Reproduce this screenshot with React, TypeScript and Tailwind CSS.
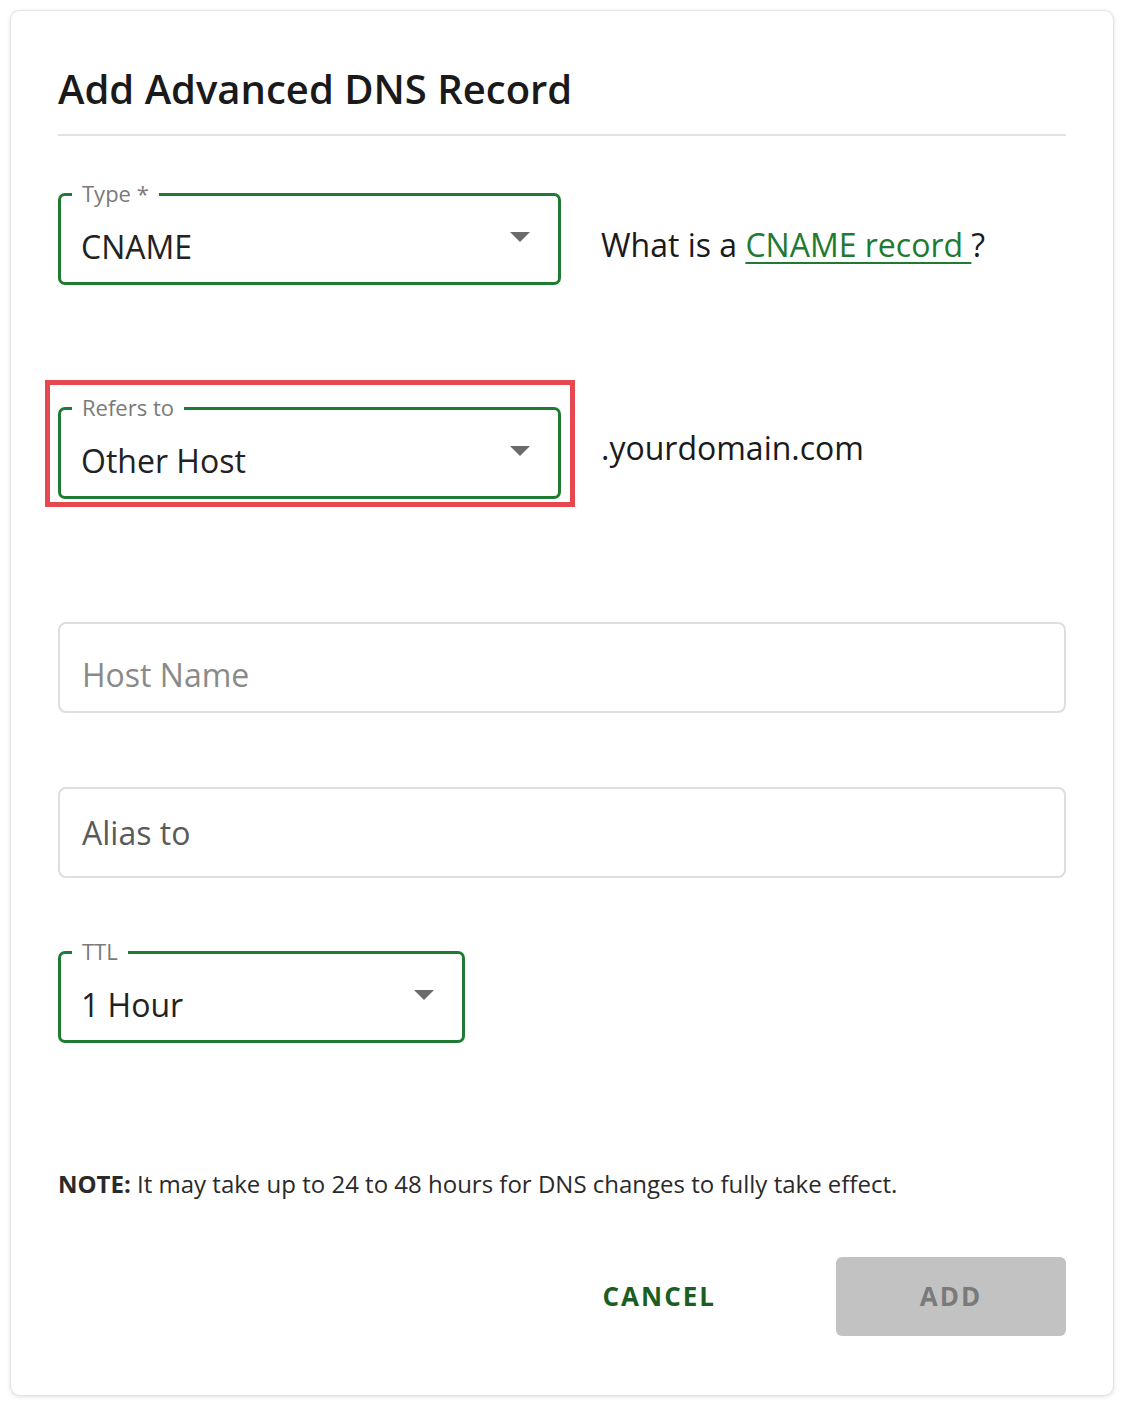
import React from "react";

function Arrow() {
  return (
    <svg width="20" height="11" viewBox="0 0 20 11" className="absolute right-[28px] top-[36px]">
      <polygon points="0,0 20,0 10,10" fill="#6b6b6b" />
    </svg>
  );
}

function Select({ label, value, width }: { label: string; value: string; width: string }) {
  return (
    <div className={`relative h-[92px] rounded-[7px] border-[3px] border-[#1f7a33] bg-white ${width}`}>
      <span className="absolute -top-[17px] left-[11px] bg-white px-[10px] text-[22px] leading-[28px] text-[#7a7a7a]">
        {label}
      </span>
      <div className="flex h-full items-center pl-[20px] pt-[16px] text-[32px] leading-[38px] text-[#222]">
        {value}
      </div>
      <Arrow />
    </div>
  );
}

export default function App() {
  return (
    <div className="min-h-screen bg-white p-[10px]" style={{ fontFamily: '"Open Sans", "Noto Sans", sans-serif' }}>
      <div className="h-[1386px] w-[1104px] rounded-[10px] border border-[#e4e4e4] bg-white px-[47px] pt-[54px] shadow-[0_1px_4px_rgba(0,0,0,0.12)]">
        <h1 className="text-[40px] font-semibold leading-[48px] text-[#1a1a1a]">Add Advanced DNS Record</h1>
        <div className="mt-[21px] h-[2px] bg-[#e2e2e2]" />

        <div className="mt-[57px] flex items-center">
          <Select label="Type *" value="CNAME" width="w-[503px]" />
          <div className="ml-[40px] pt-[12px] text-[32px] leading-[40px] text-[#1a1a1a]">
            What is a{" "}
            <a className="text-[#1f7a33] underline decoration-[2px] underline-offset-[5px]">CNAME record </a>?
          </div>
        </div>

        <div className="mt-[122px] flex items-center">
          <div className="relative">
            <Select label="Refers to" value="Other Host" width="w-[503px]" />
            <div className="pointer-events-none absolute -left-[13px] -top-[27px] h-[127px] w-[530px] border-[5px] border-[#e5484f]" />
          </div>
          <div className="ml-[40px] pb-[10px] text-[32px] leading-[40px] text-[#1a1a1a]">.yourdomain.com</div>
        </div>

        <div className="mt-[123px] flex h-[91px] items-center rounded-[8px] border-2 border-[#dedede] pl-[22px] pt-[14px] text-[32px] text-[#8a8a8a]">
          Host Name
        </div>

        <div className="mt-[74px] flex h-[91px] items-center rounded-[8px] border-2 border-[#dedede] pl-[22px] text-[32px] text-[#5a5a5a]">
          Alias to
        </div>

        <div className="mt-[73px]">
          <Select label="TTL" value="1 Hour" width="w-[407px]" />
        </div>

        <p className="mt-[126px] text-[24px] leading-[30px] text-[#2a2a2a]">
          <span className="font-bold">NOTE:</span> It may take up to 24 to 48 hours for DNS changes to fully take effect.
        </p>

        <div className="mt-[58px] flex items-center justify-end">
          <button className="mr-[120px] text-[26px] font-bold tracking-[2px] text-[#1b5e20]">CANCEL</button>
          <button className="h-[79px] w-[230px] rounded-[6px] bg-[#c2c2c2] text-[26px] font-bold tracking-[2px] text-[#7a7a7a]">
            ADD
          </button>
        </div>
      </div>
    </div>
  );
}
